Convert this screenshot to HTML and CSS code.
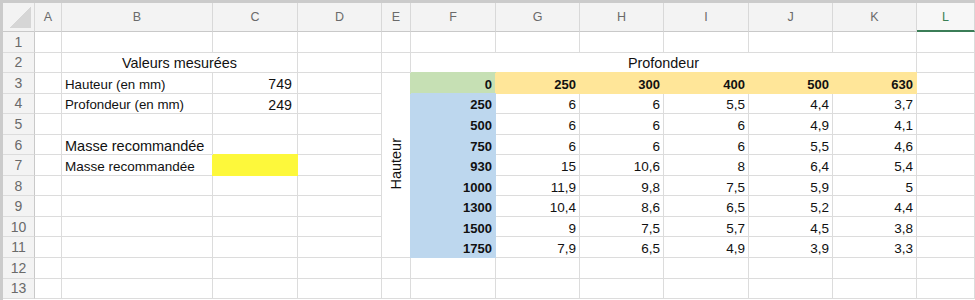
FILE: index.html
```html
<!DOCTYPE html>
<html lang="fr">
<head>
  <meta charset="UTF-8">
  <title>Masse recommandée</title>
  <link rel="stylesheet" href="styles.css">
</head>
<body>
  <div class="sheet">
    <table class="grid">
      <colgroup>
        <col class="c-hdr"><col class="c-a"><col class="c-b"><col class="c-c"><col class="c-d"><col class="c-e">
        <col class="c-f"><col class="c-g"><col class="c-h"><col class="c-i"><col class="c-j"><col class="c-k"><col class="c-l">
      </colgroup>
      <tr class="head">
        <th class="corner"><span class="tri"></span></th>
        <th>A</th><th>B</th><th>C</th><th>D</th><th>E</th><th>F</th>
        <th>G</th><th>H</th><th>I</th><th>J</th><th>K</th><th class="sel">L</th>
      </tr>
      <tr><th class="rn">1</th><td></td><td></td><td></td><td></td><td></td><td></td><td></td><td></td><td></td><td></td><td></td><td></td></tr>
      <tr><th class="rn">2</th><td></td><td colspan="2" class="title">Valeurs mesurées</td><td></td><td></td><td colspan="6" class="title">Profondeur</td><td></td></tr>
      <tr>
        <th class="rn">3</th><td></td><td class="lbl">Hauteur (en mm)</td><td class="num pad">749</td><td></td>
        <td rowspan="9" class="side"><span class="vert">Hauteur</span></td>
        <td class="num bold green">0</td><td class="num bold orange">250</td><td class="num bold orange">300</td>
        <td class="num bold orange">400</td><td class="num bold orange">500</td><td class="num bold orange">630</td><td></td>
      </tr>
      <tr>
        <th class="rn">4</th><td></td><td class="lbl">Profondeur (en mm)</td><td class="num pad">249</td><td></td>
        <td class="num bold blue">250</td><td class="num">6</td><td class="num">6</td><td class="num">5,5</td><td class="num">4,4</td><td class="num">3,7</td><td></td>
      </tr>
      <tr>
        <th class="rn">5</th><td></td><td></td><td></td><td></td>
        <td class="num bold blue">500</td><td class="num">6</td><td class="num">6</td><td class="num">6</td><td class="num">4,9</td><td class="num">4,1</td><td></td>
      </tr>
      <tr>
        <th class="rn">6</th><td></td><td class="big">Masse recommandée</td><td></td><td></td>
        <td class="num bold blue">750</td><td class="num">6</td><td class="num">6</td><td class="num">6</td><td class="num">5,5</td><td class="num">4,6</td><td></td>
      </tr>
      <tr>
        <th class="rn">7</th><td></td><td class="lbl mid">Masse recommandée</td><td class="yellow"></td><td></td>
        <td class="num bold blue">930</td><td class="num">15</td><td class="num">10,6</td><td class="num">8</td><td class="num">6,4</td><td class="num">5,4</td><td></td>
      </tr>
      <tr>
        <th class="rn">8</th><td></td><td></td><td></td><td></td>
        <td class="num bold blue">1000</td><td class="num">11,9</td><td class="num">9,8</td><td class="num">7,5</td><td class="num">5,9</td><td class="num">5</td><td></td>
      </tr>
      <tr>
        <th class="rn">9</th><td></td><td></td><td></td><td></td>
        <td class="num bold blue">1300</td><td class="num">10,4</td><td class="num">8,6</td><td class="num">6,5</td><td class="num">5,2</td><td class="num">4,4</td><td></td>
      </tr>
      <tr>
        <th class="rn">10</th><td></td><td></td><td></td><td></td>
        <td class="num bold blue">1500</td><td class="num">9</td><td class="num">7,5</td><td class="num">5,7</td><td class="num">4,5</td><td class="num">3,8</td><td></td>
      </tr>
      <tr>
        <th class="rn">11</th><td></td><td></td><td></td><td></td>
        <td class="num bold blue">1750</td><td class="num">7,9</td><td class="num">6,5</td><td class="num">4,9</td><td class="num">3,9</td><td class="num">3,3</td><td></td>
      </tr>
      <tr><th class="rn">12</th><td></td><td></td><td></td><td></td><td></td><td></td><td></td><td></td><td></td><td></td><td></td><td></td></tr>
      <tr><th class="rn">13</th><td></td><td></td><td></td><td></td><td></td><td></td><td></td><td></td><td></td><td></td><td></td><td></td></tr>
    </table>
  </div>
</body>
</html>
```
FILE: styles.css
```css
body {
  margin: 0;
  background: #fff;
  font-family: "Liberation Sans", Arial, sans-serif;
  color: #111;
}
.sheet {
  width: 972px;
  height: 297px;
  border-top: 3px solid #cbcbcb;
  border-left: 3px solid #cbcbcb;
  overflow: hidden;
}
.grid {
  table-layout: fixed;
  width: 972px;
  border-collapse: separate;
  border-spacing: 0;
  font-size: 13.5px;
}
.c-hdr { width: 32px; }
.c-a { width: 27px; }
.c-b { width: 151px; }
.c-c { width: 85px; }
.c-d { width: 84px; }
.c-e { width: 29px; }
.c-f { width: 85px; }
.c-g { width: 84px; }
.c-h { width: 84px; }
.c-i { width: 85px; }
.c-j { width: 84px; }
.c-k { width: 84px; }
.c-l { width: 58px; }

tr { height: 20.55px; }
tr.head { height: 29px; }

th, td {
  padding: 0 3px;
  border-right: 1px solid #dcdcdc;
  border-bottom: 1px solid #dcdcdc;
  white-space: nowrap;
  overflow: hidden;
}
td { position: relative; }

.head th {
  background: #f3f3f3;
  color: #6a6a6a;
  font-weight: normal;
  font-size: 12.5px;
  text-align: center;
  border-bottom-color: #c9c9c9;
  border-right-color: #d8d8d8;
}
.head th.sel {
  background: #f7f7f7;
  color: #3b8055;
  border-bottom: 2px solid #3b7d57;
}
.corner { position: relative; }
.tri {
  position: absolute;
  right: 3px;
  bottom: 3px;
  width: 21px;
  height: 22px;
  background: linear-gradient(to bottom right, transparent 50%, #d6d6d6 50%);
}
.rn {
  background: #f3f3f3;
  color: #6a6a6a;
  font-weight: normal;
  font-size: 14px;
  text-align: center;
  border-right-color: #c9c9c9;
  border-bottom-color: #dcdcdc;
}

.title {
  text-align: center;
  font-size: 14.4px;
  padding-top: 2px;
}
.lbl {
  font-size: 13.3px;
  padding-top: 3px;
}
.mid { font-size: 13.5px; }
.big {
  font-size: 14.5px;
  padding-top: 2px;
}
.num {
  text-align: right;
  padding-top: 3px;
}
.pad {
  padding-right: 5px;
  font-size: 14.2px;
}
.bold {
  font-weight: bold;
  font-size: 13px;
}

.side {
  text-align: center;
  vertical-align: middle;
  padding: 0;
}
.vert {
  display: inline-block;
  writing-mode: vertical-rl;
  transform: rotate(180deg);
  font-size: 14.5px;
}

.green {
  background: #c6e0b4;
  border-color: #c6e0b4;
  box-shadow: 0 -1px 0 #c6e0b4, -1px 0 0 #c6e0b4;
}
.orange {
  background: #ffe699;
  border-color: #ffe699;
  box-shadow: 0 -1px 0 #ffe699, -1px 0 0 #ffe699;
}
.blue {
  background: #bdd7ee;
  border-color: #bdd7ee;
  box-shadow: 0 -1px 0 #bdd7ee, -1px 0 0 #bdd7ee;
}
.yellow {
  background: #fdf83b;
  border-color: #fdf83b;
  box-shadow: 0 -1px 0 #fdf83b, -1px 0 0 #fdf83b;
}
```
